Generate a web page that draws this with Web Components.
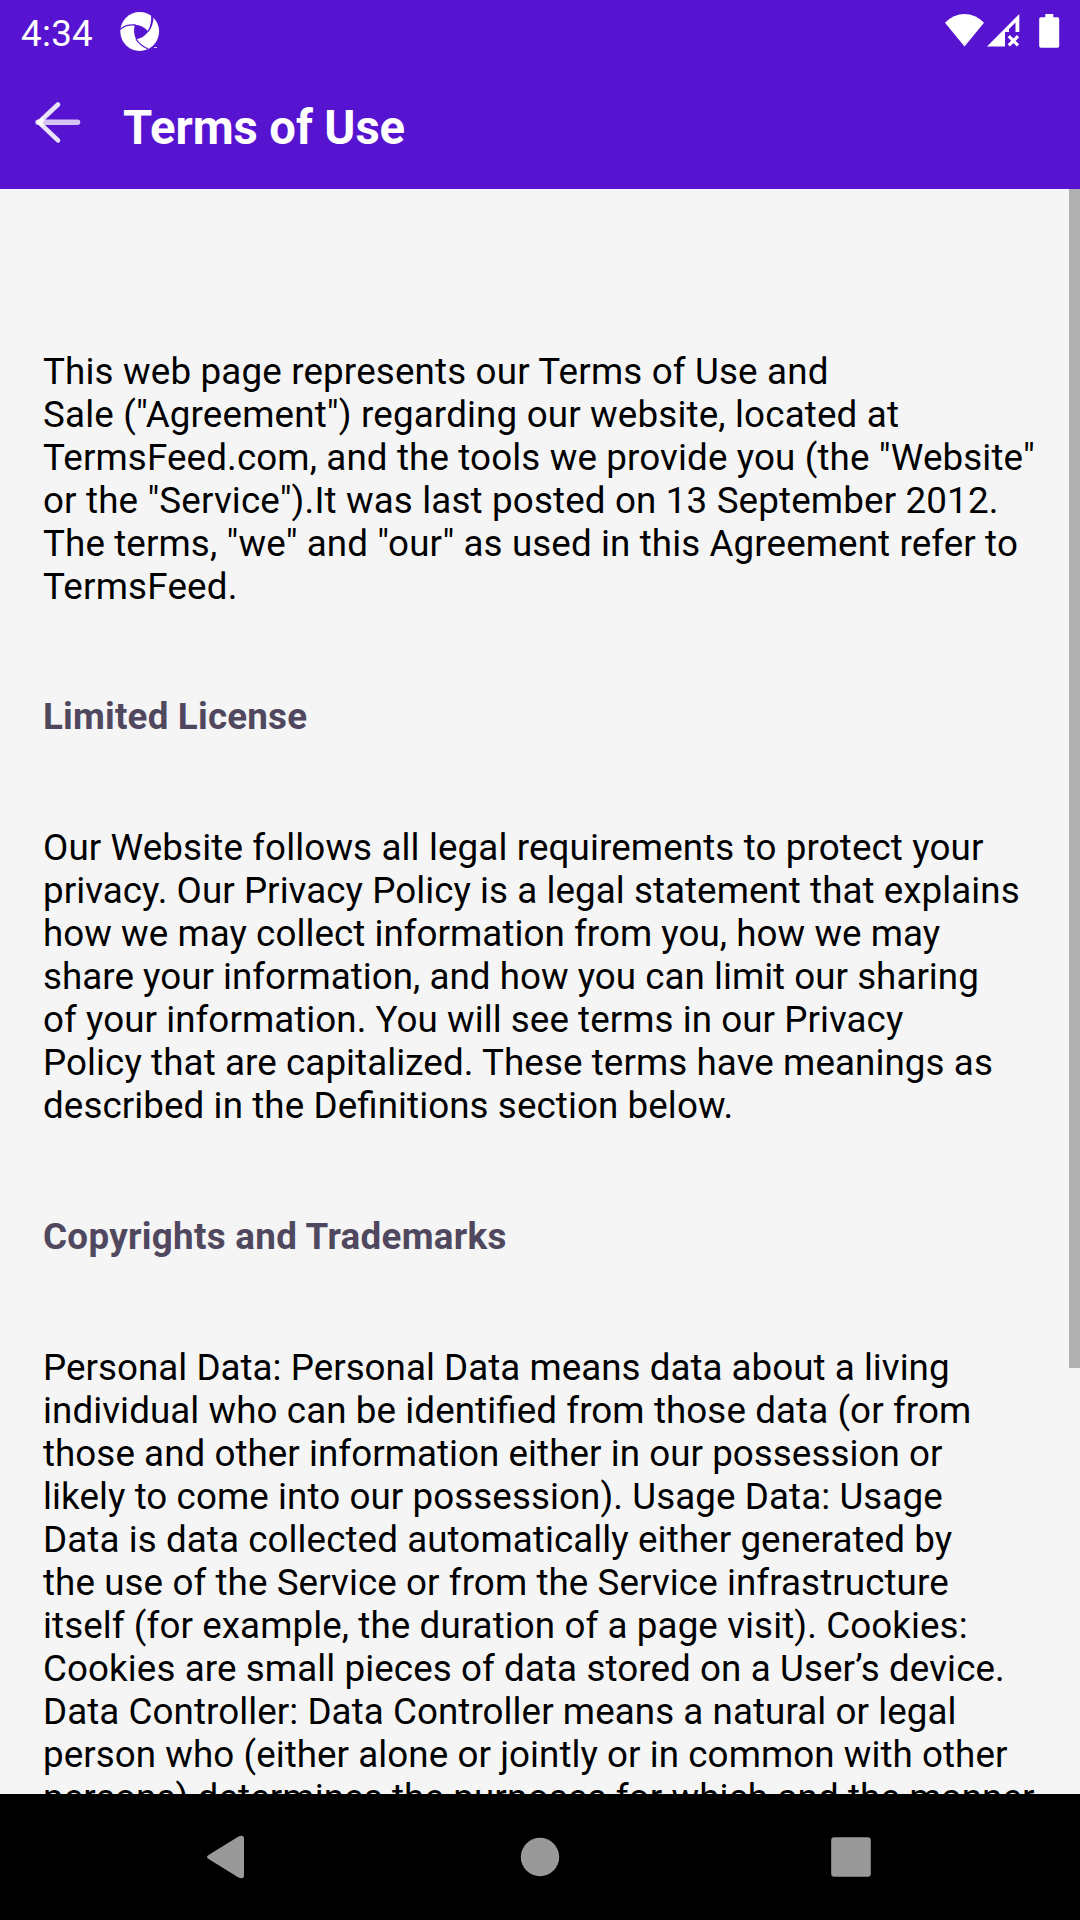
<!DOCTYPE html>
<html lang="en">
<head>
<meta charset="utf-8">
<title>Terms of Use</title>
<style>
html,body{margin:0;height:100%;overflow:hidden}
body{font-family:Roboto,sans-serif}
</style>
</head>
<body>
<terms-app></terms-app>
<script>
const define=(name,html)=>customElements.define(name,class extends HTMLElement{
  constructor(){super();this.attachShadow({mode:'open'}).innerHTML=html;}
});

define('status-bar',`
<style>
:host{display:flex;align-items:flex-start;height:63px;flex:none;color:#fff;box-sizing:border-box;padding:0 20px 0 21px}
time{font-size:36.75px;line-height:43px;margin-top:12px;width:72px;white-space:nowrap;letter-spacing:.3px}
svg{display:block;flex:none}
.logo{margin:12px 0 0 27px}
.space{flex:1}
.wifi{margin-top:14px}
.cell{margin:14px 0 0 3px}
.bat{margin:14px 0 0 19px}
</style>
<time>4:34</time>
<svg class="logo" width="40" height="40" viewBox="0 0 40 40">
<circle cx="19.7" cy="19.500" r="19.400" fill="#fff"/>
<path d="M14.800 12.800Q22.500 13 28.400 19.600Q24 26 16 27.300Q12.800 20 14.800 12.800Z" fill="#5714d0"/>
<path d="M0 17.500Q6 12 15.500 13M16 27Q19.500 33 28 37" fill="none" stroke="#5714d0" stroke-width="1.300"/>
<path d="M31 2L33.500 4Q33.500 14 28.400 20L27.800 19Q32 12 31 2ZM26 38.500Q31 36 36 35.500V40H26Z" fill="#5714d0"/>
<path d="M34 35.500H37" stroke="#fff" stroke-opacity=".8"/>
</svg>
<span class="space"></span>
<svg class="wifi" width="39" height="33" viewBox="0 0 39 33"><path d="M0 8.800Q8.500 0 19.500 0T39 8.800L19.500 32.500Z" fill="#fff"/></svg>
<svg class="cell" width="33" height="33" viewBox="0 0 33 33"><path d="M0 32.500L32.300 0V18H28.500V8.500L22 15V18H18V32.500Z" fill="#fff"/><path d="M21.800 22.200L31 31.400M31 22.200L21.800 31.400" stroke="#fff" stroke-width="3.200"/></svg>
<svg class="bat" width="21" height="34" viewBox="0 0 21 34"><path d="M6.300 0H14.300V3.300H18.500Q20.200 3.300 20.200 5V32Q20.200 33.700 18.500 33.700H1.900Q.2 33.700.2 32V5Q.2 3.300 1.900 3.300H6.300Z" fill="#fff"/></svg>
`);

define('app-bar',`
<style>
:host{display:flex;height:126px;flex:none;color:#fff;box-sizing:border-box;padding-left:34px}
svg{display:block;flex:none;margin-top:37px}
h1{margin:38px 0 0 42px;font-size:47.25px;line-height:55px;font-weight:700;white-space:nowrap;letter-spacing:-.1px}
</style>
<svg width="47" height="44" viewBox="0 0 47 44"><path d="M4 22.300H43.500" stroke="#fff" stroke-opacity=".75" stroke-width="5.500" stroke-linecap="round"/><path d="M24 4.500L5 22.300L24 40.300" fill="none" stroke="#fff" stroke-opacity=".88" stroke-width="4.600" stroke-linecap="round" stroke-linejoin="round"/><path d="M3 22.300L9 17V27.600Z" fill="#fff"/></svg>
<h1><slot></slot></h1>
`);

define('terms-heading',`
<style>
:host{display:block;margin:var(--gap-top,87px) 0 88px}
h2{margin:0;font-size:36.75px;line-height:43px;font-weight:700;color:#50485f;white-space:nowrap}
</style><h2><slot></slot></h2>`);

define('terms-text',`
<style>
:host{display:flex;flex-direction:column;font-size:36.75px;line-height:43px;color:#000}
</style><slot></slot>`);

// One line of body copy; "track" is its letter spacing in pixels.
customElements.define('terms-line',class extends HTMLElement{
  constructor(){
    super();
    this.attachShadow({mode:'open'}).innerHTML=`
<style>
:host{display:block;white-space:nowrap;font-feature-settings:"liga" 1}
</style><span><slot></slot></span>`;
  }
  connectedCallback(){
    this.shadowRoot.querySelector('span').style.letterSpacing=(this.getAttribute('track')||0)+'px';
  }
});

define('scroll-view',`
<style>
:host{display:flex;flex:1;min-height:0;overflow:hidden;background:#f5f5f5}
.content{flex:1;min-width:0;padding:161px 0 0 43px}
.thumb{width:11px;height:1179px;background:#b0b0b0;flex:none}
</style>
<div class="content"><slot></slot></div><div class="thumb"></div>`);

define('nav-bar',`
<style>
:host{display:flex;flex:none;height:126px;background:#000;align-items:center;box-sizing:border-box;padding-left:195px}
svg{display:block;flex:none}
.home{margin:0 251px 0 255px}
</style>
<svg width="60" height="60" viewBox="0 0 60 60"><path d="M12.800 28.500Q11 30 12.800 31.500L43.500 50.500Q49 52.500 49 48.500V11.500Q49 7.500 43.500 9.500Z" fill="#999"/></svg>
<svg class="home" width="60" height="60" viewBox="0 0 60 60"><circle cx="30" cy="30" r="19.200" fill="#999"/></svg>
<svg width="60" height="60" viewBox="0 0 60 60"><rect x="10.200" y="10.200" width="39.600" height="39.600" rx="3" fill="#999"/></svg>
`);

define('terms-app',`
<style>
:host{display:flex;flex-direction:column;width:1080px;height:1920px;background:#5714d0;overflow:hidden}
.first{letter-spacing:.2px}
.second{--gap-top:88px;letter-spacing:.3px}
</style>
<status-bar></status-bar>
<app-bar>Terms of Use</app-bar>
<scroll-view>
<terms-text>
<terms-line track=".16">This web page represents our Terms of Use and</terms-line>
<terms-line track=".16">Sale ("Agreement") regarding our website, located at</terms-line>
<terms-line track=".127">TermsFeed.com, and the tools we provide you (the "Website"</terms-line>
<terms-line track=".148">or the "Service").It was last posted on 13 September 2012.</terms-line>
<terms-line track=".11">The terms, "we" and "our" as used in this Agreement refer to</terms-line>
<terms-line track=".2">TermsFeed.</terms-line>
</terms-text>
<terms-heading class="first">Limited License</terms-heading>
<terms-text>
<terms-line track=".118">Our Website follows all legal requirements to protect your</terms-line>
<terms-line track=".055">privacy. Our Privacy Policy is a legal statement that explains</terms-line>
<terms-line track=".047">how we may collect information from you, how we may</terms-line>
<terms-line track=".02">share your information, and how you can limit our sharing</terms-line>
<terms-line track=".055">of your information. You will see terms in our Privacy</terms-line>
<terms-line track=".085">Policy that are capitalized. These terms have meanings as</terms-line>
<terms-line track=".085">described in the Definitions section below.</terms-line>
</terms-text>
<terms-heading class="second">Copyrights and Trademarks</terms-heading>
<terms-text>
<terms-line track=".025">Personal Data: Personal Data means data about a living</terms-line>
<terms-line track=".085">individual who can be identified from those data (or from</terms-line>
<terms-line track=".05">those and other information either in our possession or</terms-line>
<terms-line track=".08">likely to come into our possession). Usage Data: Usage</terms-line>
<terms-line track=".085">Data is data collected automatically either generated by</terms-line>
<terms-line track=".085">the use of the Service or from the Service infrastructure</terms-line>
<terms-line track=".09">itself (for example, the duration of a page visit). Cookies:</terms-line>
<terms-line track=".09">Cookies are small pieces of data stored on a User’s device.</terms-line>
<terms-line track=".065">Data Controller: Data Controller means a natural or legal</terms-line>
<terms-line track=".06">person who (either alone or jointly or in common with other</terms-line>
<terms-line track=".105">persons) determines the purposes for which and the manner</terms-line>
</terms-text>
</scroll-view>
<nav-bar></nav-bar>
`);
</script>
</body>
</html>
